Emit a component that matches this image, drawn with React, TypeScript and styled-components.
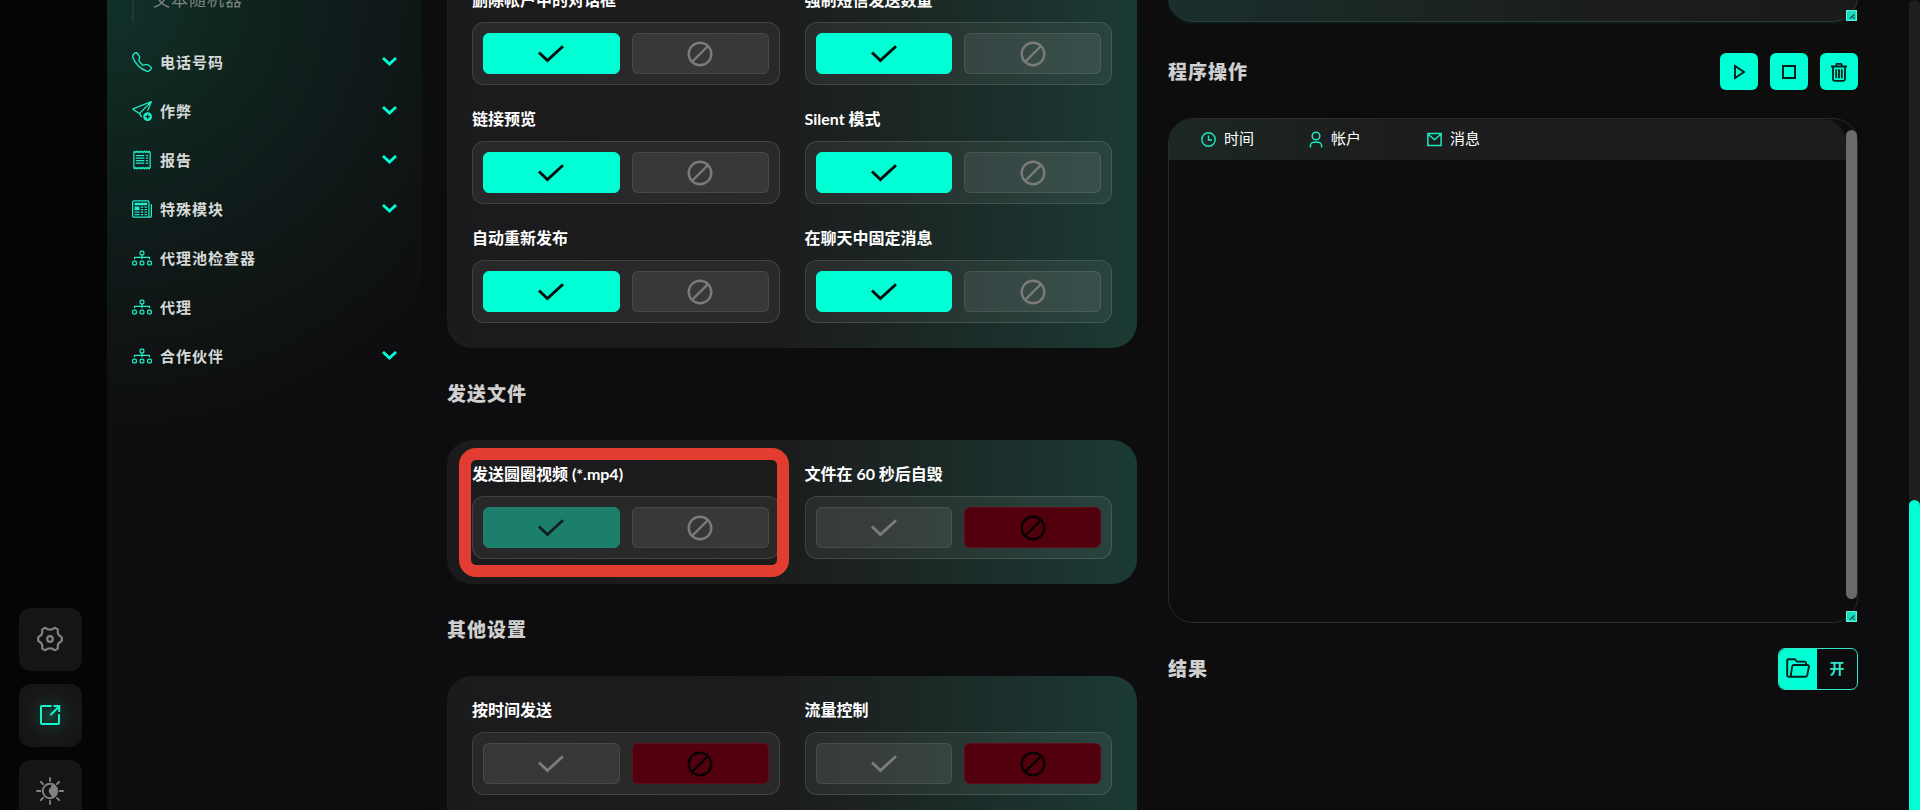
import React from "react";
import styled, { createGlobalStyle, css } from "styled-components";
import {
  BsTelephone,
  BsSendPlus,
  BsReceipt,
  BsNewspaper,
  BsDiagram3,
} from "react-icons/bs";

const ACCENT = "#00ffd5";

const GlobalStyle = createGlobalStyle`
  *, *::before, *::after { box-sizing: border-box; }
  body {
    margin: 0;
    background: #0d0c0e;
    color: #fff;
    font-family: Lato, "Noto Sans CJK SC", sans-serif;
  }
  button, textarea { font: inherit; color: inherit; }
  button { cursor: pointer; padding: 0; border: 0; background: none; }
  svg { display: block; flex: none; }
`;

const Page = styled.div`
  display: grid;
  grid-template-columns: 107px 315px minmax(0, 1fr) 11px;
  height: 100vh;
  overflow: hidden;
  background: linear-gradient(180deg, #0c0d0c, #0d0c0e 50%);
`;

/* ---------- icon rail ---------- */

const Rail = styled.aside`
  display: flex;
  flex-direction: column;
  justify-content: flex-end;
  align-items: flex-start;
  gap: 13px;
  min-height: 0;
  padding-left: 19px;
  margin-bottom: -13px;
  background: #050505;
`;

const RailButton = styled.button<{ $active?: boolean }>`
  display: flex;
  align-items: center;
  justify-content: center;
  width: 63px;
  height: 63px;
  padding: 0 2px 2px 0;
  border-radius: 12px;
  background: #151515;
  color: #828282;
  ${(p) =>
    p.$active &&
    css`
      color: #14f5cd;
      background: radial-gradient(circle, #14453b 0, #162723 22%, #171918 50%, #151515 75%);
    `}
`;

/* ---------- side menu ---------- */

const Sidebar = styled.nav`
  min-height: 0;
  overflow: hidden;
  padding: 0 25px;
  background: radial-gradient(ellipse 440px 430px at 0 0, #10302a 0, #10251f 30%, #0f1b1a 55%, #0f1414 78%, #0e0e10 100%);
`;

const SubMenu = styled.ul`
  list-style: none;
  margin: -11px 0 15px;
  padding: 0 0 11px 19px;
  border-left: 2px solid #1f3934;
`;

const SubLink = styled.a`
  display: block;
  font-size: 17px;
  line-height: 22px;
  letter-spacing: 1px;
  color: #7c8482;
  text-decoration: none;
`;

const Menu = styled.ul`
  list-style: none;
  margin: 0;
  padding: 0;
`;

const menuRow = css`
  display: flex;
  align-items: center;
  gap: 8px;
  width: 100%;
  height: 49px;
  font-size: 15px;
  line-height: 20px;
  font-weight: 700;
  letter-spacing: 1px;
  color: #d6d9d8;
  text-align: left;
  text-decoration: none;
  > svg:first-child { color: #1df0ca; }
`;

const MenuButton = styled.button`${menuRow}`;
const MenuLink = styled.a`${menuRow}`;
const MenuText = styled.span`flex: 1;`;

/* ---------- main area ---------- */

const Content = styled.main`
  display: grid;
  grid-template-columns: repeat(2, minmax(0, 1fr));
  gap: 31px;
  min-height: 0;
  padding: 0 51px 0 25px;
`;

const Settings = styled.section`
  display: flex;
  flex-direction: column;
  min-height: 0;
  margin-top: -34px;
`;

const Heading = styled.h2`
  margin: 0;
  font-size: 19px;
  line-height: 20px;
  font-weight: 900;
  letter-spacing: 1px;
  color: #cfcfcf;
`;

const SettingsHeading = styled(Heading)`
  margin: 36px 0;
`;

const Card = styled.div<{ $fill?: boolean }>`
  display: grid;
  grid-template-columns: repeat(2, minmax(0, 1fr));
  align-content: start;
  gap: 25px;
  padding: 25px;
  border-radius: 25px;
  background: linear-gradient(90deg, #1b1b1d 0, #1c1c1d 48%, #1b2725 67%, #1b332e 88%, #1a3b33 100%);
  ${(p) =>
    p.$fill &&
    css`
      flex: 1;
      border-radius: 25px 25px 0 0;
    `}
`;

const Field = styled.div`
  position: relative;
`;

const FieldLabel = styled.div`
  padding-top: 1px;
  margin-bottom: 14px;
  font-size: 16px;
  line-height: 16px;
  font-weight: 700;
  white-space: nowrap;
`;

const Toggle = styled.div`
  display: flex;
  gap: 12px;
  height: 63px;
  padding: 10px;
  border: 1px solid rgba(255, 255, 255, 0.12);
  border-radius: 12px;
  background: rgba(255, 255, 255, 0.06);
`;

type Tone = "idle" | "on" | "soft" | "off";

const tones = {
  idle: css`
    background: rgba(255, 255, 255, 0.07);
    border-color: rgba(255, 255, 255, 0.09);
    color: #7b7b7b;
  `,
  on: css`
    background: ${ACCENT};
    border-color: ${ACCENT};
    color: #050c0b;
  `,
  soft: css`
    background: #1b7f6c;
    border-color: #1b7f6c;
    color: #10201f;
  `,
  off: css`
    background: #52000e;
    border-color: #640b19;
    color: #080203;
  `,
};

const ToggleButton = styled.button<{ $tone: Tone }>`
  flex: 1;
  display: flex;
  align-items: center;
  justify-content: center;
  border: 1px solid;
  border-radius: 6px;
  ${(p) => tones[p.$tone]}
`;

const Highlight = styled.div`
  position: absolute;
  inset: -17px -9px -18px -13px;
  border: 12px solid #e33d31;
  border-radius: 17px;
  pointer-events: none;
`;

/* ---------- right column ---------- */

const Output = styled.section`
  display: flex;
  flex-direction: column;
  min-height: 0;
  margin-top: -78px;
`;

const Resizable = styled.div`
  position: relative;
  display: flex;
  flex: none;
`;

const Grip = styled.span`
  position: absolute;
  right: 1px;
  bottom: 1px;
  width: 11px;
  height: 11px;
  border: 1px solid #57f5dc;
  background: #1cdcbd;
`;

const Message = styled.textarea`
  width: 100%;
  height: 100px;
  padding: 25px;
  resize: none;
  border: 1px solid #2b3a37;
  border-radius: 25px;
  background: linear-gradient(90deg, #1a2e2c 0, #1b2523 35%, #1b1e1b 60%, #1a1b19 100%);
  box-shadow: -1px 2px 3px rgba(0, 255, 213, 0.07);
  outline: none;
`;

const HeadRow = styled.header<{ $compact?: boolean }>`
  display: flex;
  align-items: center;
  justify-content: space-between;
  flex: none;
  margin: ${(p) => (p.$compact ? "25px 0 0" : "31px 0 28px")};
`;

const Actions = styled.div`
  display: flex;
  gap: 12px;
`;

const ActionButton = styled.button`
  display: flex;
  align-items: center;
  justify-content: center;
  width: 38px;
  height: 37px;
  border-radius: 6px;
  background: ${ACCENT};
  color: #06201c;
`;

const LogPanel = styled.div`
  flex: 1;
  height: 505px;
  padding-right: 11px;
  border: 1px solid #292b2b;
  border-radius: 25px;
  background: #0d0d0e;
`;

const LogTable = styled.table`
  width: 100%;
  border-collapse: collapse;
  table-layout: fixed;
  overflow: hidden;
  border-radius: 24px 24px 0 0;
  background: linear-gradient(90deg, #1c2825 0, #1c1f1e 25%, #1c1b1d 60%);
`;

const LogCell = styled.th<{ $width?: number }>`
  ${(p) => p.$width && css`width: ${p.$width}px;`}
  height: 41px;
  padding: 0;
  font-size: 15px;
  line-height: 20px;
  font-weight: 400;
  text-align: left;
  &:first-child { padding-left: 32px; }
`;

const LogTitle = styled.span`
  display: flex;
  align-items: center;
  gap: 8px;
  padding-bottom: 3px;
  svg { color: #1ce8c4; margin-top: 3px; }
`;

const LogScroll = styled.span`
  position: absolute;
  top: 12px;
  right: 1px;
  bottom: 24px;
  width: 11px;
  border-radius: 6px;
  background: #6b696a;
`;

const OpenButton = styled.button`
  display: flex;
  width: 80px;
  height: 42px;
  overflow: hidden;
  border: 1px solid #2fe6c8;
  border-radius: 7px;
`;

const OpenIcon = styled.span`
  display: flex;
  align-items: center;
  justify-content: center;
  width: 38px;
  height: 100%;
  padding-bottom: 2px;
  background: ${ACCENT};
  color: #06201c;
`;

const OpenText = styled.span`
  flex: 1;
  align-self: center;
  padding-bottom: 2px;
  font-size: 15px;
  line-height: 20px;
  font-weight: 700;
  color: #2fe6c8;
`;

const PageScroll = styled.div`
  display: flex;
  flex-direction: column;
  justify-content: flex-end;
  border-radius: 6px 6px 0 0;
  background: #201f20;
`;

const PageThumb = styled.div`
  height: 310px;
  border-radius: 6px 6px 0 0;
  background: ${ACCENT};
`;

/* ---------- icons ---------- */

const CheckIcon = () => (
  <svg width="26" height="18" viewBox="0 0 26 18" fill="none" stroke="currentColor" strokeWidth="2.9">
    <path d="M1 7.5 9.4 15.6 25 1.2" />
  </svg>
);

const BanIcon = () => (
  <svg width="26" height="26" viewBox="0 0 26 26" fill="none" stroke="currentColor" strokeWidth="2.4">
    <circle cx="13" cy="13" r="11.3" />
    <path d="M5 21 21 5" />
  </svg>
);

const ChevronIcon = () => (
  <svg width="15" height="10" viewBox="0 0 15 10" fill="none" stroke={ACCENT} strokeWidth="2.8">
    <path d="M1 1 7.5 7 14 1" />
  </svg>
);

const GearIcon = () => (
  <svg width="26" height="26" viewBox="0 0 26 26" fill="none" stroke="currentColor" strokeWidth="2.2" strokeLinejoin="round">
    <path d="M7.7 1.9Q8.4 1.6 9 2.2C10.4 4 15.6 4 17 2.2Q17.6 1.6 18.3 1.9L20.4 3.1Q21.1 3.6 20.9 4.4C20 6.6 21.6 9.6 23.8 10.4Q24.8 10.8 24.8 11.6V14.4Q24.8 15.2 23.8 15.6C21.6 16.4 20 19.4 20.9 21.6Q21.1 22.4 20.4 22.9L18.3 24.1Q17.6 24.4 17 23.8C15.6 22 10.4 22 9 23.8Q8.4 24.4 7.7 24.1L5.6 22.9Q4.9 22.4 5.1 21.6C6 19.4 4.4 16.4 2.2 15.6Q1.2 15.2 1.2 14.4V11.6Q1.2 10.8 2.2 10.4C4.4 9.6 6 6.6 5.1 4.4Q4.9 3.6 5.6 3.1Z" />
    <circle cx="13" cy="13" r="2.8" />
  </svg>
);

const ShareIcon = () => (
  <svg width="22" height="22" viewBox="0 0 22 22" fill="none" stroke="currentColor" strokeWidth="2">
    <path d="M12.5 2H3a1 1 0 0 0-1 1v16a1 1 0 0 0 1 1h16a1 1 0 0 0 1-1v-9" />
    <path d="M11.5 11 20 2.5M14.5 2H20.2v6" />
  </svg>
);

const ThemeIcon = () => (
  <svg width="28" height="28" viewBox="0 0 28 28" fill="none" stroke="currentColor" strokeWidth="1.9">
    <circle cx="14" cy="14" r="7.2" />
    <path
      fill="currentColor"
      stroke="none"
      d="M16.8 7.6A7.2 7.2 0 0 1 16.8 20.4C15 19.8 15.2 18.6 15 18A4.6 4.6 0 0 1 15 10C15.2 9.4 15 8.2 16.8 7.6Z"
    />
    <path
      strokeLinecap="round"
      d="M14 1v3M14 24v3M1 14h3.4M23.6 14H27M4.8 4.8 7 7M21 21l2.2 2.2M4.8 23.2 7 21M21 7l2.2-2.2"
    />
  </svg>
);

const PlayIcon = () => (
  <svg width="16" height="16" viewBox="0 0 16 16" fill="none" stroke="currentColor" strokeWidth="1.9">
    <path d="M4 2 13 8 4 14Z" />
  </svg>
);

const StopIcon = () => (
  <svg width="14" height="14" viewBox="0 0 14 14" fill="none" stroke="currentColor" strokeWidth="2">
    <path d="M1 1h12v12H1Z" />
  </svg>
);

const TrashIcon = () => (
  <svg width="18" height="20" viewBox="0 0 18 20" fill="none" stroke="currentColor" strokeWidth="1.8">
    <path d="M1 4.5h16M3 4.5V17a1.8 1.8 0 0 0 1.8 1.8h8.4A1.8 1.8 0 0 0 15 17V4.5M6 4 6.6 1.8h4.8L12 4M6.2 7.2v9M9 7.2v9M11.8 7.2v9" />
  </svg>
);

const ClockIcon = () => (
  <svg width="15" height="15" viewBox="0 0 15 15" fill="none" stroke="currentColor" strokeWidth="1.4">
    <circle cx="7.5" cy="7.5" r="6.7" />
    <path d="M7.5 3.6v4.4H11" />
  </svg>
);

const UserIcon = () => (
  <svg width="14" height="17" viewBox="0 0 14 17" fill="none" stroke="currentColor" strokeWidth="1.5">
    <circle cx="7" cy="5" r="3.8" />
    <path d="M1.4 16.4v-1.6a3.6 3.6 0 0 1 3.6-3.6h4a3.6 3.6 0 0 1 3.6 3.6v1.6" />
  </svg>
);

const MailIcon = () => (
  <svg width="15" height="15" viewBox="0 0 15 15" fill="none" stroke="currentColor" strokeWidth="1.5">
    <path d="M.9 1.4h13.2v12.2H.9ZM1 2l6.5 5.8L14 2" />
  </svg>
);

const FolderIcon = () => (
  <svg width="24" height="20" viewBox="0 0 24 20" fill="none" stroke="currentColor" strokeWidth="1.9" strokeLinejoin="round">
    <path d="M20 6.6V5.4a1.8 1.8 0 0 0-1.8-1.8H11L8.8 1.2H2.6A1.4 1.4 0 0 0 1.2 2.6v14.6a1.6 1.6 0 0 0 1.6 1.6h16.6a1.8 1.8 0 0 0 1.8-1.4l1.7-8.6a1.4 1.4 0 0 0-1.4-1.8H8a1.8 1.8 0 0 0-1.8 1.4L4.6 18.6" />
  </svg>
);

const GripMark = () => (
  <svg width="9" height="9" viewBox="0 0 9 9" fill="none" stroke="#0b4f45" strokeWidth="1.3">
    <path d="M3 7.5 7.5 3.5M6.2 7.6 7.6 6.4" />
  </svg>
);

/* ---------- data ---------- */

const menu = [
  { text: "电话号码", icon: BsTelephone, expandable: true },
  { text: "作弊", icon: BsSendPlus, expandable: true },
  { text: "报告", icon: BsReceipt, expandable: true },
  { text: "特殊模块", icon: BsNewspaper, expandable: true },
  { text: "代理池检查器", icon: BsDiagram3, expandable: false },
  { text: "代理", icon: BsDiagram3, expandable: false },
  { text: "合作伙伴", icon: BsDiagram3, expandable: true },
];

const general = [
  "删除帐户中的对话框",
  "强制短信发送数量",
  "链接预览",
  "Silent 模式",
  "自动重新发布",
  "在聊天中固定消息",
];

interface OptionProps {
  label: string;
  yes?: Tone;
  no?: Tone;
  highlighted?: boolean;
}

const Option = ({ label, yes = "idle", no = "idle", highlighted }: OptionProps) => {
  const id = React.useId();
  return (
    <Field>
      <FieldLabel id={id}>{label}</FieldLabel>
      <Toggle role="group" aria-labelledby={id}>
        <ToggleButton type="button" $tone={yes} aria-pressed={yes !== "idle"} aria-label="是">
          <CheckIcon />
        </ToggleButton>
        <ToggleButton type="button" $tone={no} aria-pressed={no !== "idle"} aria-label="否">
          <BanIcon />
        </ToggleButton>
      </Toggle>
      {highlighted && <Highlight />}
    </Field>
  );
};

export default function App() {
  return (
    <>
      <GlobalStyle />
      <Page>
        <Rail>
          <RailButton type="button" aria-label="设置">
            <GearIcon />
          </RailButton>
          <RailButton type="button" aria-label="打开" $active>
            <ShareIcon />
          </RailButton>
          <RailButton type="button" aria-label="主题">
            <ThemeIcon />
          </RailButton>
        </Rail>

        <Sidebar>
          <SubMenu>
            <li>
              <SubLink href="#random">文本随机器</SubLink>
            </li>
          </SubMenu>
          <Menu>
            {menu.map(({ text, icon: Icon, expandable }) => (
              <li key={text}>
                {expandable ? (
                  <MenuButton type="button">
                    <Icon size={20} />
                    <MenuText>{text}</MenuText>
                    <ChevronIcon />
                  </MenuButton>
                ) : (
                  <MenuLink href="#proxy">
                    <Icon size={20} />
                    <MenuText>{text}</MenuText>
                  </MenuLink>
                )}
              </li>
            ))}
          </Menu>
        </Sidebar>

        <Content>
          <Settings>
            <Card>
              {general.map((label) => (
                <Option key={label} label={label} yes="on" />
              ))}
            </Card>
            <SettingsHeading>发送文件</SettingsHeading>
            <Card>
              <Option label="发送圆圈视频 (*.mp4)" yes="soft" highlighted />
              <Option label="文件在 60 秒后自毁" no="off" />
            </Card>
            <SettingsHeading>其他设置</SettingsHeading>
            <Card $fill>
              <Option label="按时间发送" no="off" />
              <Option label="流量控制" no="off" />
            </Card>
          </Settings>

          <Output>
            <Resizable>
              <Message aria-label="消息" />
              <Grip><GripMark /></Grip>
            </Resizable>
            <HeadRow>
              <Heading>程序操作</Heading>
              <Actions>
                <ActionButton type="button" aria-label="开始"><PlayIcon /></ActionButton>
                <ActionButton type="button" aria-label="停止"><StopIcon /></ActionButton>
                <ActionButton type="button" aria-label="清除"><TrashIcon /></ActionButton>
              </Actions>
            </HeadRow>
            <Resizable>
              <LogPanel>
                <LogTable>
                  <thead>
                    <tr>
                      <LogCell scope="col" $width={140}>
                        <LogTitle><ClockIcon />时间</LogTitle>
                      </LogCell>
                      <LogCell scope="col" $width={118}>
                        <LogTitle><UserIcon />帐户</LogTitle>
                      </LogCell>
                      <LogCell scope="col">
                        <LogTitle><MailIcon />消息</LogTitle>
                      </LogCell>
                    </tr>
                  </thead>
                </LogTable>
              </LogPanel>
              <LogScroll />
              <Grip><GripMark /></Grip>
            </Resizable>
            <HeadRow $compact>
              <Heading>结果</Heading>
              <OpenButton type="button">
                <OpenIcon><FolderIcon /></OpenIcon>
                <OpenText>开</OpenText>
              </OpenButton>
            </HeadRow>
          </Output>
        </Content>

        <PageScroll>
          <PageThumb />
        </PageScroll>
      </Page>
    </>
  );
}
